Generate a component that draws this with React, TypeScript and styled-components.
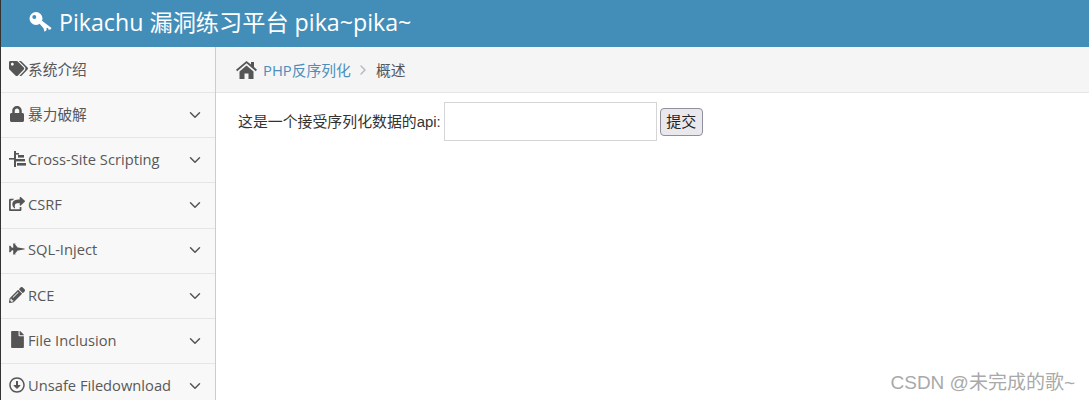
import React from "react";
import styled, { createGlobalStyle } from "styled-components";
import {
  FaTags,
  FaLock,
  FaShareSquare,
  FaFighterJet,
  FaPencilAlt,
  FaFile,
  FaRegArrowAltCircleDown,
} from "react-icons/fa";
import { ChevronDown, ChevronRight } from "lucide-react";

const Global = createGlobalStyle`
  html, body { margin: 0; padding: 0; height: 400px; overflow: hidden; background: #fff; }
  * { box-sizing: border-box; }
  body { font-family: "Open Sans", "Noto Sans CJK SC", sans-serif; }
`;

const Page = styled.div`
  width: 1089px;
  height: 400px;
  position: relative;
  overflow: hidden;
  display: flex;
  flex-direction: column;
  border-left: 1px solid #333;
`;

const Header = styled.header`
  height: 47px;
  flex: none;
  background: #438eb9;
  color: #fff;
  display: flex;
  align-items: center;
  gap: 7px;
  padding: 0 0 4px 28px;
  font-size: 23.2px;
`;

const Title = styled.span`
  font-family: "Open Sans", "Noto Sans CJK SC", sans-serif;
  line-height: 30px;
`;

const Body = styled.div`
  flex: 1;
  display: flex;
  min-height: 0;
`;

const Sidebar = styled.nav`
  width: 215px;
  flex: none;
  background: #f8f8f8;
  border-right: 1px solid #ccc;
  padding-top: 0.95px;
  overflow: hidden;
`;

const NavRow = styled.div`
  height: 45.18px;
  border-bottom: 1px solid #e5e5e5;
  display: flex;
  align-items: center;
  padding: 0 11px 2.5px 8px;
  color: #585858;
  font-size: 14.7px;
  line-height: 20px;
`;

const IconSlot = styled.span`
  width: 19px;
  flex: none;
  display: flex;
  align-items: center;
  color: #555;
`;

const NavLabel = styled.span`
  flex: 1;
  white-space: nowrap;
`;

const Chevron = styled(ChevronDown)`
  margin-top: 2px;
  color: #555;
`;

const Main = styled.main`
  flex: 1;
  min-width: 0;
`;

const Breadcrumb = styled.div`
  height: 46px;
  background: #f5f5f5;
  border-bottom: 1px solid #e5e5e5;
  display: flex;
  align-items: center;
  padding: 0 0 0 20px;
  font-size: 14.8px;
`;

const Crumb = styled.a`
  color: #4c8fbd;
  margin-left: 6px;
`;

const Sep = styled.span`
  display: flex;
  color: #b2b6bf;
  margin: 0 5px 0 4px;
`;

const Current = styled.span`
  color: #555;
`;

const Content = styled.div`
  display: flex;
  align-items: center;
  padding: 9px 0 0 22px;
  gap: 3px;
  font-family: "Liberation Sans", "Noto Sans CJK SC", sans-serif;
  font-size: 14.9px;
  color: #333;
`;

const Prompt = styled.span`
  padding-bottom: 2px;
`;

const Field = styled.input`
  width: 213px;
  height: 39px;
  border: 1px solid #d5d5d5;
  background: #fff;
  padding: 0;
  outline: none;
`;

const Submit = styled.button`
  height: 28px;
  width: 43px;
  padding: 0 0 2px;
  border: 1px solid #8f8f9d;
  border-radius: 4px;
  background: #e9e9ed;
  color: #222;
  font-family: "Noto Sans CJK SC", sans-serif;
  font-size: 15px;
`;

const Watermark = styled.div`
  position: absolute;
  right: 14px;
  top: 372px;
  font-family: "Liberation Sans", "Noto Sans CJK SC", sans-serif;
  font-size: 19px;
  line-height: 22px;
  color: #a9a9a9;
  white-space: nowrap;
`;

const KeyIcon = () => (
  <svg width="23" height="22" viewBox="0 0 23 21" fill="currentColor">
    <path
      fillRule="evenodd"
      d="M7 0.5a6.5 6.5 0 1 1 0 13a6.5 6.5 0 1 1 0-13ZM5.3 3.4a2 2 0 1 0 0 4a2 2 0 1 0 0-4Z"
    />
    <path d="M9.5 11l2.5-2.5 10.5 8-1 1.5-2 .3-.5-2-1.5.5v2l-2 1.5-1-3.5Z" />
  </svg>
);

const HomeIcon = () => (
  <svg width="21" height="18" viewBox="0 0 21 18" fill="#555">
    <path d="M10.5 0 15 3.6V1h3v5l3 2.8-1.2 1.4L10.5 2.2 1.2 10.2 0 8.8Z" />
    <path d="M3.5 10.6 10.5 4.6l7 6V18H12.5v-5.5h-4V18h-5Z" />
  </svg>
);

const SiteIcon = () => (
  <svg width="17" height="16" viewBox="0 0 17 16" fill="currentColor">
    <rect x="0" y="7" width="5" height="1.6" />
    <rect x="5" y="0" width="2" height="16" />
    <rect x="7" y="2" width="3" height="1.6" />
    <rect x="9" y="4" width="6" height="2.6" />
    <rect x="7" y="8" width="9" height="2.4" />
    <rect x="8" y="12" width="9" height="2.6" />
  </svg>
);

const items: { label: string; icon: React.ReactNode; chevron?: boolean }[] = [
  { label: "系统介绍", icon: <FaTags size={19} /> },
  { label: "暴力破解", icon: <FaLock size={16} />, chevron: true },
  { label: "Cross-Site Scripting", icon: <SiteIcon />, chevron: true },
  { label: "CSRF", icon: <FaShareSquare size={16} />, chevron: true },
  { label: "SQL-Inject", icon: <FaFighterJet size={16} />, chevron: true },
  { label: "RCE", icon: <FaPencilAlt size={16} />, chevron: true },
  { label: "File Inclusion", icon: <FaFile size={17} />, chevron: true },
  { label: "Unsafe Filedownload", icon: <FaRegArrowAltCircleDown size={16} />, chevron: true },
];

export default function App() {
  return (
    <Page>
      <Global />
      <Header>
        <KeyIcon />
        <Title>Pikachu 漏洞练习平台 pika~pika~</Title>
      </Header>
      <Body>
        <Sidebar>
          {items.map((it) => (
            <NavRow key={it.label}>
              <IconSlot>{it.icon}</IconSlot>
              <NavLabel>{it.label}</NavLabel>
              {it.chevron && <Chevron size={18} />}
            </NavRow>
          ))}
        </Sidebar>
        <Main>
          <Breadcrumb>
            <HomeIcon />
            <Crumb>PHP反序列化</Crumb>
            <Sep>
              <ChevronRight size={16} />
            </Sep>
            <Current>概述</Current>
          </Breadcrumb>
          <Content>
            <Prompt>这是一个接受序列化数据的api:</Prompt>
            <Field />
            <Submit>提交</Submit>
          </Content>
        </Main>
      </Body>
      <Watermark>CSDN @未完成的歌~</Watermark>
    </Page>
  );
}
